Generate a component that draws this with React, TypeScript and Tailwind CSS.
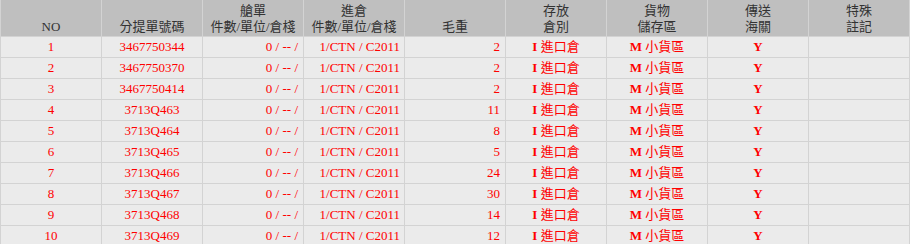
const rows = [
  { no: 1, bill: "3467750344", weight: 2 },
  { no: 2, bill: "3467750370", weight: 2 },
  { no: 3, bill: "3467750414", weight: 2 },
  { no: 4, bill: "3713Q463", weight: 11 },
  { no: 5, bill: "3713Q464", weight: 8 },
  { no: 6, bill: "3713Q465", weight: 5 },
  { no: 7, bill: "3713Q466", weight: 24 },
  { no: 8, bill: "3713Q467", weight: 30 },
  { no: 9, bill: "3713Q468", weight: 14 },
  { no: 10, bill: "3713Q469", weight: 12 },
];

const headers: [string, string][] = [
  ["", "NO"],
  ["", "分提單號碼"],
  ["艙單", "件數/單位/倉棧"],
  ["進倉", "件數/單位/倉棧"],
  ["", "毛重"],
  ["存放", "倉別"],
  ["貨物", "儲存區"],
  ["傳送", "海關"],
  ["特殊", "註記"],
];

const td = "h-[20px] border border-[#d3d3d3] p-0 leading-[20px] whitespace-nowrap";

export default function App() {
  return (
    <div className="w-[910px] overflow-hidden bg-white font-['Liberation_Serif','Noto_Sans_CJK_TC',serif] text-[13px]">
      <table className="w-[910px] table-fixed border-collapse">
        <colgroup>
          {headers.map((_, i) => (
            <col key={i} className="w-[101px]" />
          ))}
        </colgroup>
        <thead>
          <tr className="bg-[#bfbfbf] text-[#333]">
            {headers.map(([top, bottom], i) => (
              <th
                key={i}
                className="h-[36px] border border-t-0 border-[#d3d3d3] px-0 pb-[1px] text-center align-bottom font-normal leading-[16px]"
              >
                {top && <div>{top}</div>}
                <div>{bottom}</div>
              </th>
            ))}
          </tr>
        </thead>
        <tbody>
          {rows.map((r) => (
            <tr key={r.no} className="bg-[#ebebeb] text-[#ff0000]">
              <td className={`${td} text-center`}>{r.no}</td>
              <td className={`${td} text-center`}>{r.bill}</td>
              <td className={`${td} pr-[5px] text-right`}>0 / -- /</td>
              <td className={`${td} pr-[4px] text-right`}>1/CTN / C2011</td>
              <td className={`${td} pr-[5px] text-right`}>{r.weight}</td>
              <td className={`${td} text-center`}>
                <span className="font-bold">I</span> 進口倉
              </td>
              <td className={`${td} text-center`}>
                <span className="font-bold">M</span> 小貨區
              </td>
              <td className={`${td} text-center font-bold`}>Y</td>
              <td className={td}></td>
            </tr>
          ))}
        </tbody>
      </table>
    </div>
  );
}
